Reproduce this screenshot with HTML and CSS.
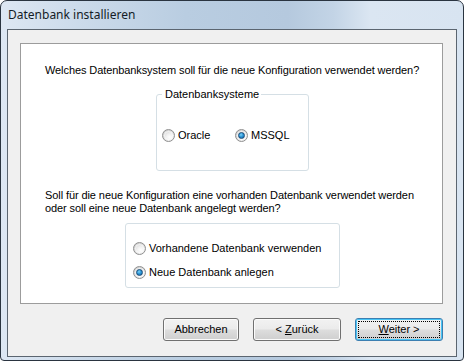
FILE: index.html
```html
<!DOCTYPE html>
<html>
<head>
<meta charset="utf-8">
<link rel="stylesheet" href="styles.css">
</head>
<body>
<div class="window">
  <div class="titlebar">Datenbank installieren</div>
  <div class="client">
    <div class="panel">
      <p class="q1">Welches Datenbanksystem soll für die neue Konfiguration verwendet werden?</p>
      <fieldset class="group g1">
        <legend>Datenbanksysteme</legend>
        <div class="hrow">
          <label class="opt opt-first"><span class="radio"></span>Oracle</label>
          <label class="opt"><span class="radio checked"></span>MSSQL</label>
        </div>
      </fieldset>
      <p class="q2">Soll für die neue Konfiguration eine vorhanden Datenbank verwendet werden<br>oder soll eine neue Datenbank angelegt werden?</p>
      <div class="group g2">
        <label class="opt"><span class="radio"></span>Vorhandene Datenbank verwenden</label>
        <label class="opt"><span class="radio checked"></span>Neue Datenbank anlegen</label>
      </div>
    </div>
    <div class="buttons">
      <button class="btn b-cancel">Abbrechen</button>
      <button class="btn b-back">&lt; <u>Z</u>urück</button>
      <button class="btn b-next default"><span class="focus"><u>W</u>eiter &gt;</span></button>
    </div>
  </div>
</div>
</body>
</html>
```

FILE: styles.css
```css
html, body {
  margin: 0;
  padding: 0;
  background: #ffffff;
}

.window {
  width: 464px;
  height: 361px;
  box-sizing: border-box;
  border: 1px solid #2a3440;
  border-radius: 7px 7px 4px 4px;
  padding: 0 6px 3px 6px;
  background: linear-gradient(90deg, #dde7f3 0%, #cbdaea 18%, #b9cde1 40%, #b5c9de 62%, #c3d4e6 72%, #dbe6f2 80%, #d8e4f1 100%);
  font-family: "Liberation Sans", Arial, sans-serif;
  font-size: 11px;
  color: #000;
  display: flex;
  flex-direction: column;
}

.titlebar {
  height: 28px;
  flex: none;
  box-sizing: border-box;
  padding: 6px 0 0 1px;
  font-family: "Noto Sans", "Open Sans", sans-serif;
  font-size: 12px;
  line-height: 16px;
  color: #141c26;
  white-space: nowrap;
}

.client {
  flex: 1;
  border: 1px solid #5b6570;
  background: #f0f0f0;
  padding: 13px 13px 15px 12px;
  display: flex;
  flex-direction: column;
}

.panel {
  height: 261px;
  box-sizing: border-box;
  border: 1px solid #9c9c9c;
  background: #ffffff;
  padding: 20px 0 0 24px;
}

.q1, .q2 {
  margin: 0;
  line-height: 13px;
  white-space: nowrap;
  letter-spacing: -0.09px;
}

.q2 {
  margin-top: 18px;
}

.group {
  box-sizing: border-box;
  border: 1px solid #d5dfe5;
  border-radius: 3px;
  margin: 0;
  min-width: 0;
}

.g1 {
  margin: 11px 0 0 111px;
  width: 153px;
  height: 83px;
  padding: 0 0 0 5px;
}

.g1 legend {
  margin-left: 0px;
  padding: 0 2px 0 3px;
  line-height: 13px;
}

.hrow {
  margin-top: 28px;
  display: flex;
}

.opt {
  display: flex;
  align-items: center;
  line-height: 13px;
  height: 13px;
  white-space: nowrap;
}

.opt-first {
  width: 73px;
}

.g2 {
  margin: 8px 0 0 80px;
  width: 215px;
  height: 65px;
  padding: 18px 0 0 7px;
  display: flex;
  flex-direction: column;
  gap: 11px;
}

.radio {
  position: relative;
  width: 13px;
  height: 13px;
  box-sizing: border-box;
  border-radius: 50%;
  border: 1px solid #8f8f8f;
  background: radial-gradient(circle at 60% 65%, #ffffff 0%, #f0f0f0 35%, #d2d2d2 75%, #c4c4c4 100%);
  margin-right: 3px;
  flex: none;
}

.radio::before {
  content: "";
  position: absolute;
  inset: 1px;
  border-radius: 50%;
  border: 1px solid rgba(255,255,255,0.6);
}

.radio.checked::after {
  content: "";
  position: absolute;
  left: 2px;
  top: 2px;
  width: 7px;
  height: 7px;
  box-sizing: border-box;
  border-radius: 50%;
  border: 1px solid #1a4d7a;
  background: radial-gradient(circle at 40% 35%, #7fd2f7 0%, #2d98d8 45%, #0e5896 100%);
}

.buttons {
  margin-top: 14px;
  display: flex;
  justify-content: flex-end;
}

.btn {
  height: 23px;
  box-sizing: border-box;
  border: 1px solid #707070;
  border-radius: 3px;
  background: linear-gradient(180deg, #f2f2f2 0%, #ebebeb 48%, #dddddd 52%, #cfcfcf 100%);
  box-shadow: inset 0 0 0 1px #fbfbfb;
  font-family: "Liberation Sans", Arial, sans-serif;
  font-size: 11px;
  color: #000;
  padding: 0;
  line-height: 19px;
}

.btn u {
  text-decoration: underline;
  text-underline-offset: 1px;
}

.b-cancel {
  width: 76px;
}

.b-back {
  width: 88px;
  margin-left: 14px;
}

.b-next {
  width: 88px;
  margin-left: 14px;
}

.default {
  border-color: #3c7fb1;
  box-shadow: inset 0 0 0 1px #48c5f6;
  padding: 2px;
}

.focus {
  display: block;
  height: 17px;
  line-height: 15px;
  box-sizing: border-box;
  border: 1px dotted #000;
}
```
